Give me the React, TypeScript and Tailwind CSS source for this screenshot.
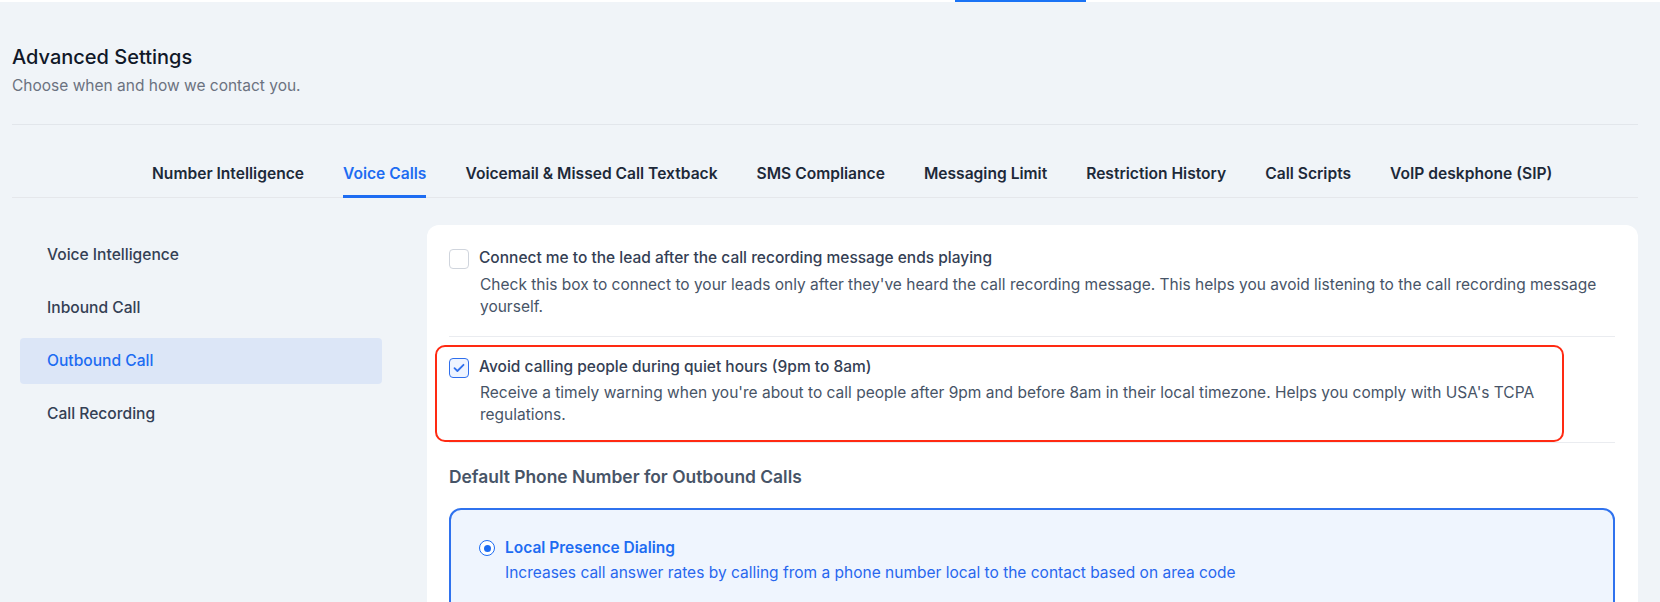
import { useState } from 'react';

const TABS = [
  'Number Intelligence',
  'Voice Calls',
  'Voicemail & Missed Call Textback',
  'SMS Compliance',
  'Messaging Limit',
  'Restriction History',
  'Call Scripts',
  'VoIP deskphone (SIP)',
];

const SIDE_ITEMS = ['Voice Intelligence', 'Inbound Call', 'Outbound Call', 'Call Recording'];

function Checkbox({ checked }: { checked: boolean }) {
  if (!checked) {
    return (
      <span className="mt-[2px] block h-[20px] w-[20px] shrink-0 rounded-[4px] border border-[#d0d5dd] bg-white" />
    );
  }
  return (
    <span className="mt-[2px] flex h-[20px] w-[20px] shrink-0 items-center justify-center rounded-[4px] border border-[#2f6fed] bg-[#eef4ff]">
      <svg width="12" height="10" viewBox="0 0 12 10" fill="none">
        <path d="M1.5 5.2 4.4 8 10.5 1.8" stroke="#2f6fed" strokeWidth="1.8" strokeLinecap="round" strokeLinejoin="round" />
      </svg>
    </span>
  );
}

export default function App() {
  const [activeTab] = useState('Voice Calls');
  const [activeSide] = useState('Outbound Call');

  return (
    <div className="min-h-screen bg-[#f0f4f8] font-[Inter,sans-serif]">
      {/* top strip */}
      <div className="h-[2px] bg-white">
        <div className="ml-[955px] h-[2px] w-[131px] bg-[#1a73f5]" />
      </div>

      <div className="pl-3 pr-[22px]">
        {/* header */}
        <div className="border-b border-[#e2e6eb] pb-[26px] pt-[41px]">
          <h1 className="text-[20px] font-medium leading-[28px] text-[#101828]">Advanced Settings</h1>
          <p className="mt-[3px] text-[15.5px] leading-[24px] text-[#6b7280]">Choose when and how we contact you.</p>
        </div>

        {/* tabs */}
        <div className="flex gap-[39px] border-b border-[#e5e7eb] pl-[140px]">
          {TABS.map((tab) => (
            <div
              key={tab}
              className={
                tab === activeTab
                  ? '-mb-px border-b-[3px] border-[#1d6cf2] pb-[10px] pt-[38px] text-[15.6px] font-semibold leading-[22px] text-[#1d6cf2]'
                  : '-mb-px border-b-[3px] border-transparent pb-[10px] pt-[38px] text-[15.6px] font-semibold leading-[22px] text-[#1d2939]'
              }
            >
              {tab}
            </div>
          ))}
        </div>

        <div className="flex">
          {/* sidebar */}
          <div className="ml-2 mt-[34px] flex w-[362px] shrink-0 flex-col gap-[7px]">
            {SIDE_ITEMS.map((item) => (
              <div
                key={item}
                className={
                  item === activeSide
                    ? 'flex h-[46px] items-center rounded-[4px] bg-[#dce6f7] pl-[27px] text-[15.6px] font-medium text-[#1d6cf2]'
                    : 'flex h-[46px] items-center rounded-[4px] pl-[27px] text-[15.6px] font-medium text-[#344054]'
                }
              >
                {item}
              </div>
            ))}
          </div>

          {/* main card */}
          <div className="ml-[45px] mt-[27px] flex-1 rounded-xl bg-white pl-[22px] pr-[23px] pt-[22px]">
            <div className="flex gap-[10px] border-b border-[#eaecf0] pb-[18px]">
              <Checkbox checked={false} />
              <div>
                <div className="text-[15.5px] font-medium leading-[22px] text-[#344054]">
                  Connect me to the lead after the call recording message ends playing
                </div>
                <div className="mt-[5px] pl-px text-[15.5px] leading-[22px] text-[#475467]">
                  Check this box to connect to your leads only after they've heard the call recording message. This helps you avoid listening to the call recording message yourself.
                </div>
              </div>
            </div>

            <div className="relative flex gap-[10px] border-b border-[#eaecf0] pb-[16px] pt-[19px]">
              <div className="pointer-events-none absolute -left-[14px] bottom-0 right-[51px] top-[8px] rounded-[10px] border-2 border-[#ff2a12]" />
              <Checkbox checked />
              <div>
                <div className="text-[15.5px] font-medium leading-[22px] text-[#344054]">
                  Avoid calling people during quiet hours (9pm to 8am)
                </div>
                <div className="mt-[4px] pl-px text-[15.5px] leading-[22px] text-[#475467]">
                  Receive a timely warning when you're about to call people after 9pm and before 8am in their local timezone. Helps you comply with USA's TCPA regulations.
                </div>
              </div>
            </div>

            <h3 className="mt-[22px] text-[17.4px] font-semibold leading-[24px] text-[#475467]">
              Default Phone Number for Outbound Calls
            </h3>

            <div className="mt-[19px] rounded-xl border-2 border-[#2f72ee] bg-[#eff5fe] pb-[70px] pl-[28px] pt-[27px]">
              <div className="flex gap-[10px]">
                <span className="mt-[3px] flex h-[16px] w-[16px] shrink-0 items-center justify-center rounded-full border-[1.5px] border-[#1d6cf2] bg-white">
                  <span className="h-[7px] w-[7px] rounded-full bg-[#1d6cf2]" />
                </span>
                <div>
                  <div className="text-[15.5px] font-semibold leading-[22px] text-[#1d6cf2]">Local Presence Dialing</div>
                  <div className="mt-[3px] text-[15.5px] leading-[22px] text-[#2867ee]">
                    Increases call answer rates by calling from a phone number local to the contact based on area code
                  </div>
                </div>
              </div>
            </div>
          </div>
        </div>
      </div>
    </div>
  );
}
